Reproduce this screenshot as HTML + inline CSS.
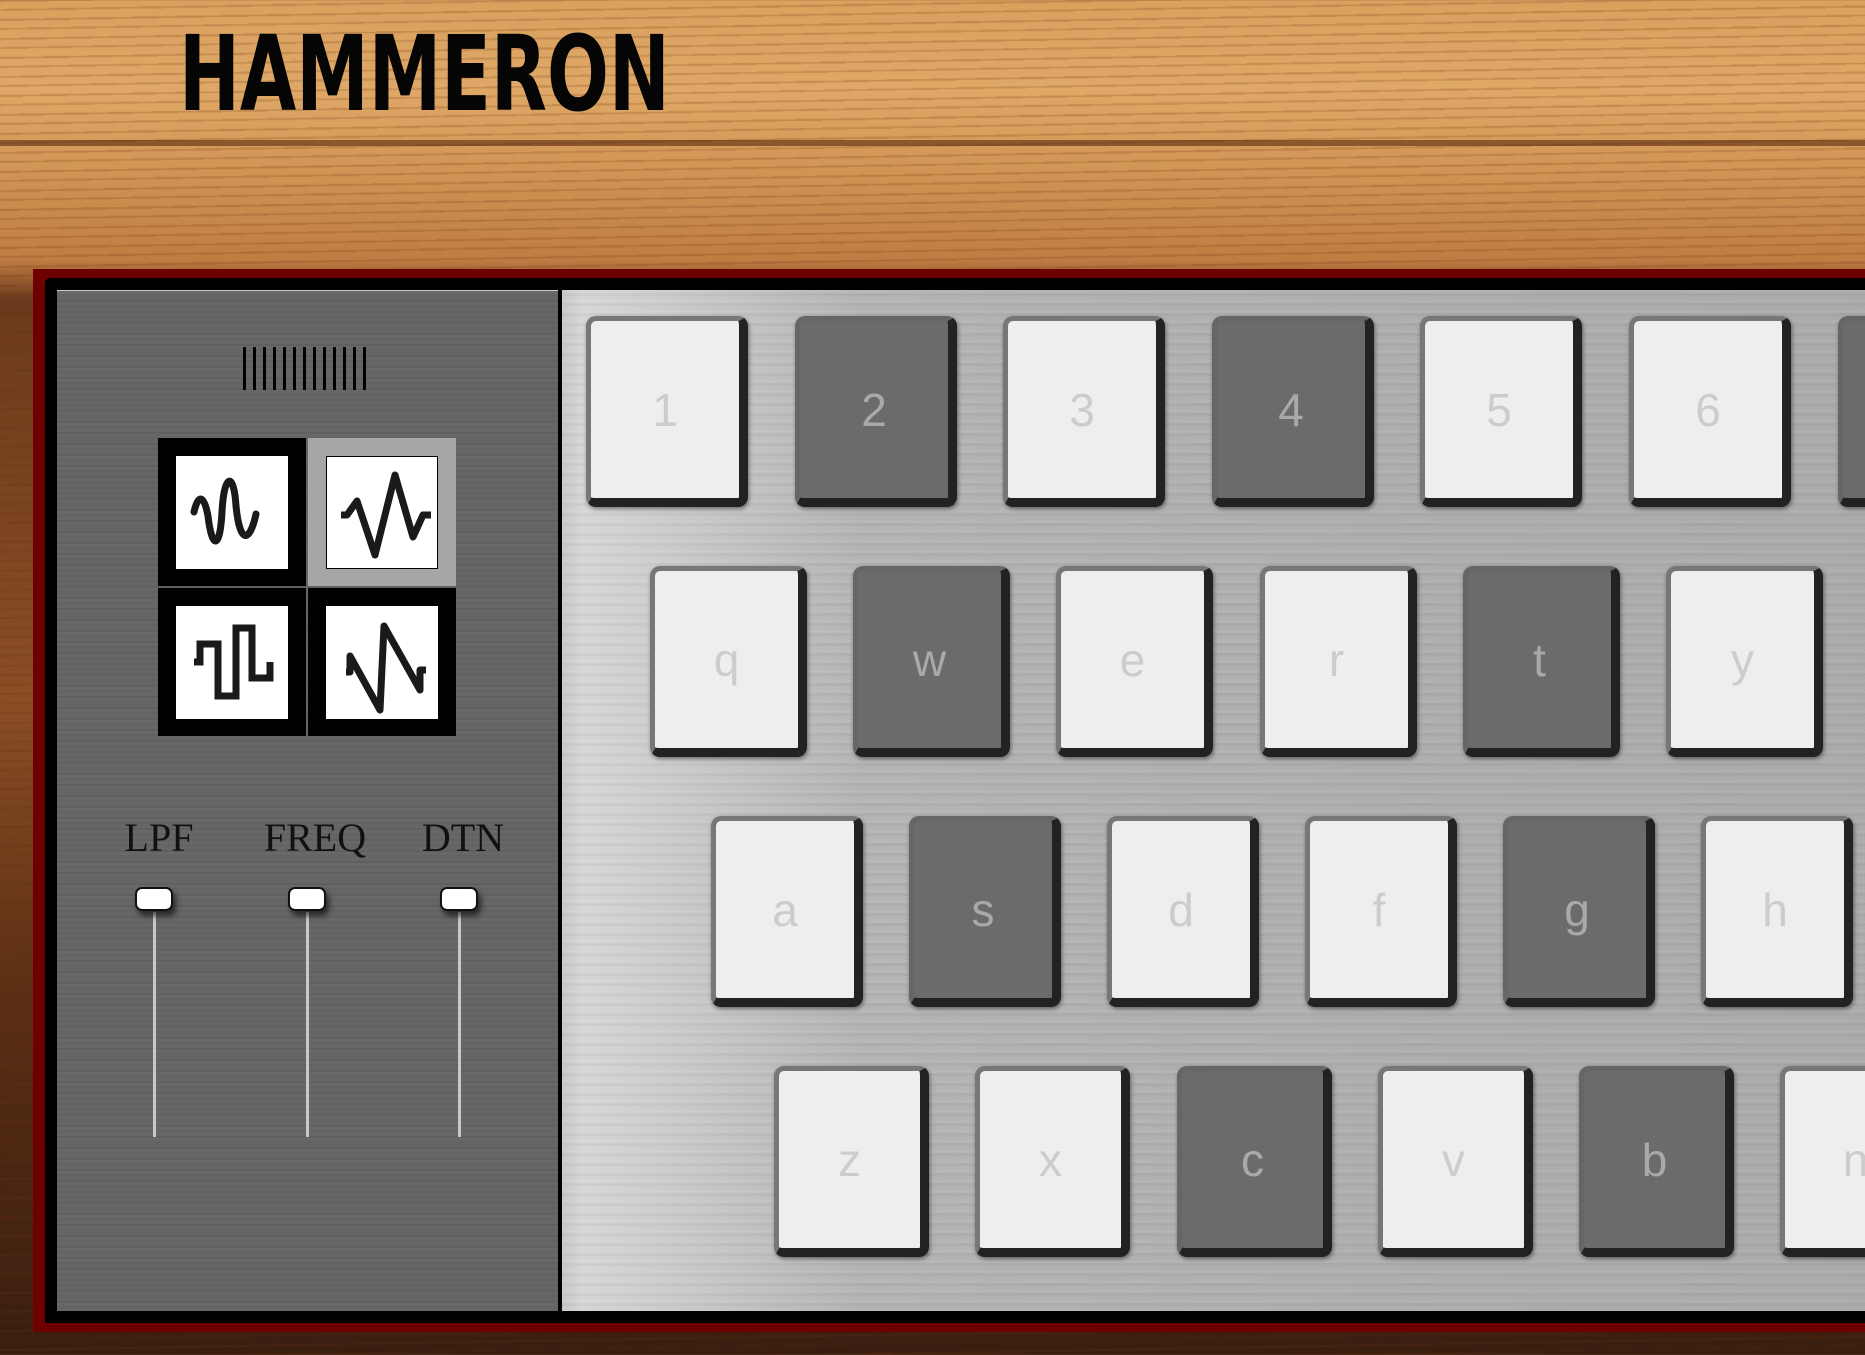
<!DOCTYPE html>
<html><head><meta charset="utf-8"><style>
html,body{margin:0;padding:0}
body{width:1865px;height:1355px;position:relative;overflow:hidden;
background:
repeating-linear-gradient(179deg,rgba(110,50,15,.22) 0 2px,rgba(0,0,0,0) 2px 9px,rgba(90,40,10,.18) 9px 11px,rgba(0,0,0,0) 11px 19px),
linear-gradient(180deg,#d9a05e 0,#dfa866 90px,#cf9252 180px,#c07c42 260px,#6b3a1c 300px,#8a4e24 700px,#5a2e14 1000px,#3a1e10 1355px);
font-family:"Liberation Sans",sans-serif}
.grain{position:absolute;left:0;top:140px;width:1865px;height:6px;background:rgba(80,30,10,.55)}
.title{position:absolute;left:179px;top:12px;font-family:"DejaVu Sans",sans-serif;font-weight:bold;font-size:104px;color:#050505;transform:scaleX(0.70);transform-origin:top left;line-height:1.2;white-space:nowrap}
.red{position:absolute;left:33px;top:269px;width:1900px;height:1063px;background:#6e0000}
.blk{position:absolute;left:45px;top:278px;width:1900px;height:1045px;background:#000;border-radius:5px 0 0 0}
.left{position:absolute;left:57px;top:290px;width:501px;height:1021px;
background:repeating-linear-gradient(180deg,#686868 0 3px,#636363 3px 5px,#666 5px 9px,#606060 9px 11px);border-top:1px solid #ccc;box-sizing:border-box}
.right{position:absolute;left:562px;top:290px;width:1400px;height:1021px;
background:linear-gradient(90deg,#c8c8c8 0,#d6d6d6 20px,#b4b4b4 300px,#adadad 900px,#aaa 1400px);}
.right:after{content:"";position:absolute;inset:0;background:repeating-linear-gradient(180deg,rgba(255,255,255,.05) 0 3px,rgba(0,0,0,.03) 3px 6px,rgba(255,255,255,0) 6px 10px)}
.bars{position:absolute;left:243px;top:347px;width:128px;height:43px;background:repeating-linear-gradient(90deg,#000 0 3px,transparent 3px 10px)}
.cell{position:absolute;width:148px;height:148px;background:#000}
.cell .w{position:absolute;left:18px;top:18px;width:112px;height:113px;background:#fff}
.cell.sel{background:#a6a6a6}
.cell.sel .w{border:1px solid #000;box-sizing:border-box}
.cell svg{position:absolute;left:0;top:0;width:112px;height:113px}
.lab{position:absolute;top:818px;font-family:"Liberation Serif",serif;font-size:40px;color:#111;width:140px;text-align:center;line-height:1}
.thumb{position:absolute;top:887px;width:38px;height:24px;background:#fff;border:2px solid #111;border-radius:7px;box-sizing:border-box;box-shadow:3px 5px 6px rgba(0,0,0,.6)}
.track{position:absolute;top:912px;width:3px;height:225px;background:#c8c8c8}
.key{position:absolute;height:191px;box-sizing:border-box;border-radius:10px;border-top:5px solid #777;border-left:5px solid #777;border-right:9px solid #222;border-bottom:9px solid #222;background:#eee;color:#ccc;font-size:46px;display:flex;align-items:center;justify-content:center;box-shadow:1px 2px 4px rgba(0,0,0,.45);z-index:2}
.key.d{background:#6b6b6b;color:#a9a9a9;border-top-color:#666;border-left-color:#666}
</style></head><body>
<div class="grain"></div>
<div class="title">HAMMERON</div>
<div class="red"></div><div class="blk"></div>
<div class="left"></div><div class="right"></div>
<div class="bars"></div>

<div class="cell" style="left:158px;top:438px"><div class="w"><svg viewBox="0 0 112 113"><path d="M18 56 C22 38 28 38 32 60 C36 94 44 94 46 56 C48 16 58 16 60 50 C64 90 74 86 80 58" fill="none" stroke="#1a1a1a" stroke-width="7" stroke-linecap="round"/></svg></div></div>
<div class="cell sel" style="left:308px;top:438px"><div class="w"><svg viewBox="0 0 112 113"><path d="M14 58 L20 58 L30 44 L48 98 L68 18 L86 80 L96 58 L104 58" fill="none" stroke="#1a1a1a" stroke-width="7" stroke-linejoin="round"/></svg></div></div>
<div class="cell" style="left:158px;top:588px"><div class="w"><svg viewBox="0 0 112 113"><path d="M18 56 L24 56 L24 38 L42 38 L42 90 L60 90 L60 22 L76 22 L76 72 L94 72 L94 56" fill="none" stroke="#1a1a1a" stroke-width="7"/></svg></div></div>
<div class="cell" style="left:308px;top:588px"><div class="w"><svg viewBox="0 0 112 113"><path d="M20 66 L24 66 L24 50 L54 104 L58 20 L94 84 L94 64 L100 64" fill="none" stroke="#1a1a1a" stroke-width="7" stroke-linejoin="round"/></svg></div></div>

<div class="lab" style="left:89px">LPF</div>
<div class="lab" style="left:245px">FREQ</div>
<div class="lab" style="left:393px">DTN</div>
<div class="track" style="left:153px"></div><div class="track" style="left:306px"></div><div class="track" style="left:458px"></div>
<div class="thumb" style="left:135px"></div><div class="thumb" style="left:288px"></div><div class="thumb" style="left:440px"></div>

<div class="key" style="left:586px;top:316px;width:162px">1</div>
<div class="key d" style="left:795px;top:316px;width:162px">2</div>
<div class="key" style="left:1003px;top:316px;width:162px">3</div>
<div class="key d" style="left:1212px;top:316px;width:162px">4</div>
<div class="key" style="left:1420px;top:316px;width:162px">5</div>
<div class="key" style="left:1629px;top:316px;width:162px">6</div>
<div class="key d" style="left:1838px;top:316px;width:162px">7</div>

<div class="key" style="left:650px;top:566px;width:157px">q</div>
<div class="key d" style="left:853px;top:566px;width:157px">w</div>
<div class="key" style="left:1056px;top:566px;width:157px">e</div>
<div class="key" style="left:1260px;top:566px;width:157px">r</div>
<div class="key d" style="left:1463px;top:566px;width:157px">t</div>
<div class="key" style="left:1666px;top:566px;width:157px">y</div>

<div class="key" style="left:711px;top:816px;width:152px">a</div>
<div class="key d" style="left:909px;top:816px;width:152px">s</div>
<div class="key" style="left:1107px;top:816px;width:152px">d</div>
<div class="key" style="left:1305px;top:816px;width:152px">f</div>
<div class="key d" style="left:1503px;top:816px;width:152px">g</div>
<div class="key" style="left:1701px;top:816px;width:152px">h</div>

<div class="key" style="left:774px;top:1066px;width:155px">z</div>
<div class="key" style="left:975px;top:1066px;width:155px">x</div>
<div class="key d" style="left:1177px;top:1066px;width:155px">c</div>
<div class="key" style="left:1378px;top:1066px;width:155px">v</div>
<div class="key d" style="left:1579px;top:1066px;width:155px">b</div>
<div class="key" style="left:1780px;top:1066px;width:155px">n</div>
</body></html>
